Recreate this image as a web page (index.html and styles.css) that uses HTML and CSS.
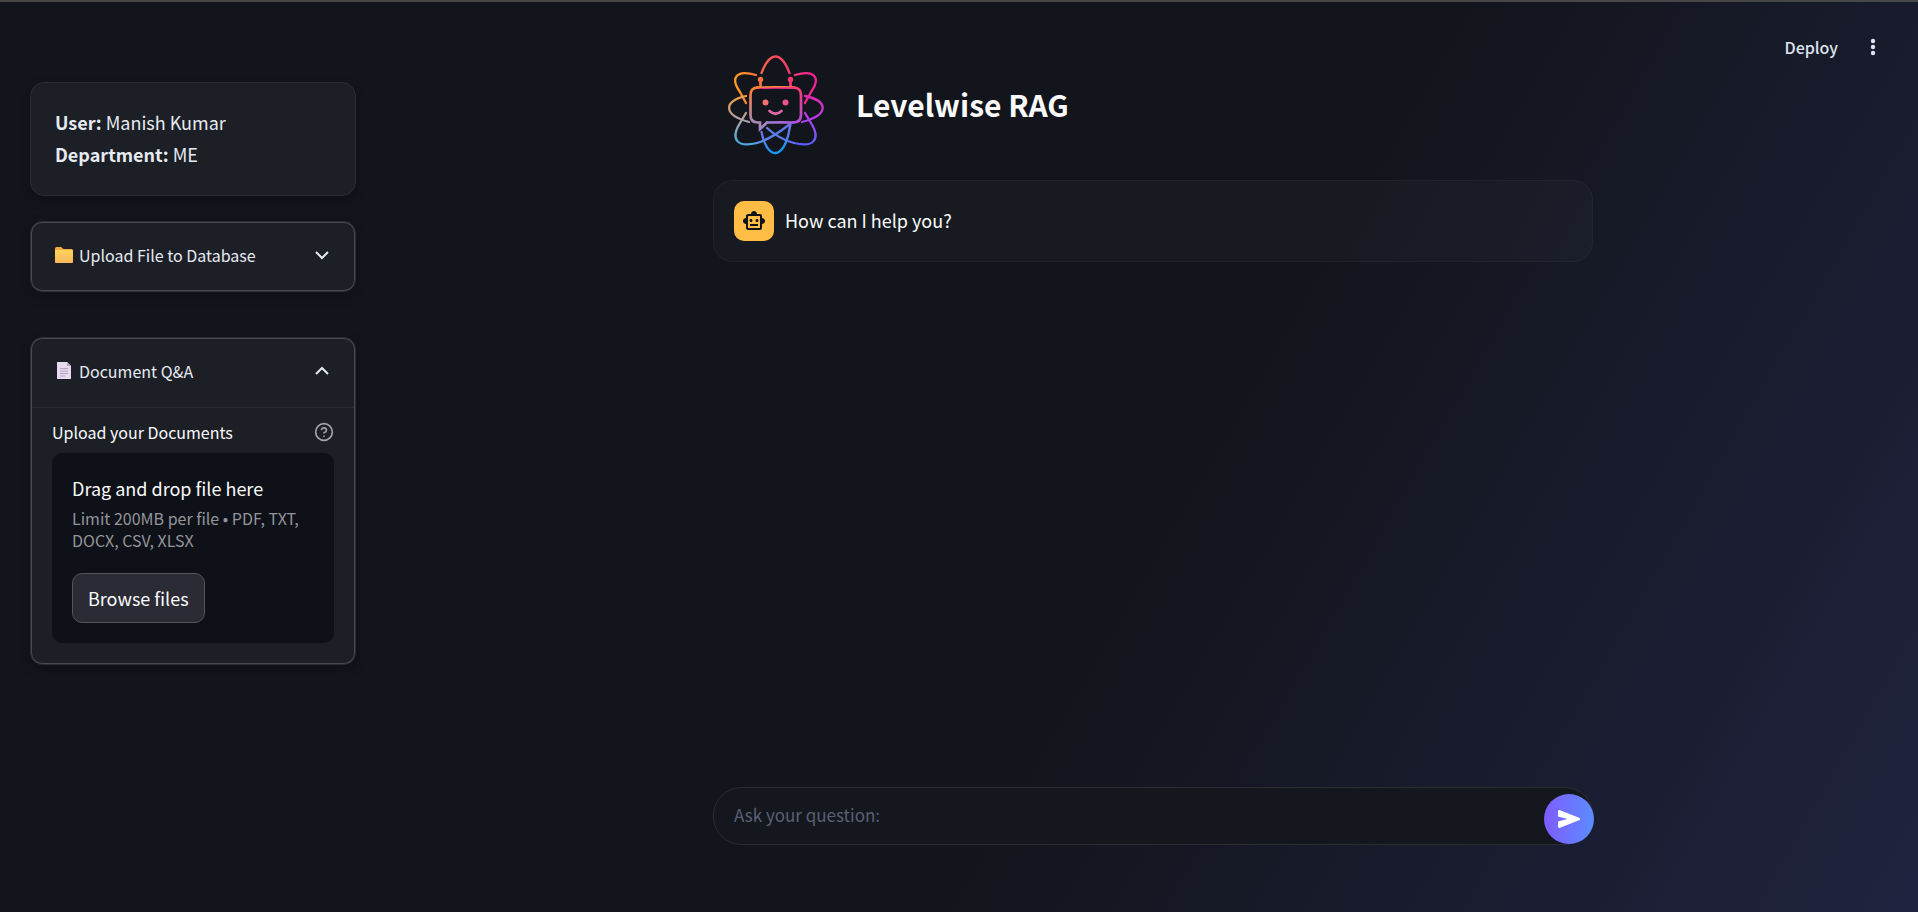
FILE: index.html
```html
<!DOCTYPE html>
<html lang="en">
<head>
<meta charset="utf-8">
<meta name="viewport" content="width=device-width, initial-scale=1">
<title>Levelwise RAG</title>
<link rel="stylesheet" href="styles.css">
</head>
<body>
<div class="app">
  <aside class="sidebar">
    <section class="card user-card">
      <p><strong>User:</strong> Manish Kumar</p>
      <p><strong>Department:</strong> ME</p>
    </section>

    <section class="card expander">
      <button class="expander-head" type="button" aria-expanded="false">
        <svg class="emoji" viewBox="0 0 20 20" aria-hidden="true">
          <path d="M1 3.500Q1 2 2.500 2H7L9.500 4H17.500Q19 4 19 5.500V9H1Z" fill="#f5a83c"/>
          <rect x="1" y="5" width="18" height="13" rx="1" fill="url(#folder)"/>
          <defs><linearGradient id="folder" x2="0" y2="1"><stop stop-color="#ffd55c"/><stop offset="1" stop-color="#f9b55c"/></linearGradient></defs>
        </svg>
        <span class="expander-title">Upload File to Database</span>
        <svg class="chevron" viewBox="0 0 20 20" aria-hidden="true"><path d="M4 7l6 6 6-6"/></svg>
      </button>
    </section>

    <section class="card expander expander-open">
      <button class="expander-head" type="button" aria-expanded="true">
        <svg class="emoji" viewBox="0 0 20 20" aria-hidden="true">
          <path d="M3 1H13L17 5V18H3Z" fill="#e6daf0"/>
          <path d="M13 1V5H17Z" fill="#b9a9c9"/>
          <path d="M6 7.500H14M6 10H14M6 12.500H14M6 15H11" stroke="#b0a3bd" stroke-width="1"/>
        </svg>
        <span class="expander-title">Document Q&amp;A</span>
        <svg class="chevron" viewBox="0 0 20 20" aria-hidden="true"><path d="M4 13l6-6 6 6"/></svg>
      </button>
      <div class="expander-body">
        <div class="label-row">
          <label for="browse">Upload your Documents</label>
          <svg class="help" viewBox="0 0 24 24" role="img" aria-label="Help"><circle cx="12" cy="12" r="10"/><path d="M9.090 9a3 3 0 0 1 5.830 1c0 2-3 3-3 3"/><path d="M12 17h.01"/></svg>
        </div>
        <div class="dropzone">
          <p>Drag and drop file here</p>
          <p class="drop-limit">Limit 200MB per file • PDF, TXT, DOCX, CSV, XLSX</p>
          <button class="browse" id="browse" type="button">Browse files</button>
        </div>
      </div>
    </section>
  </aside>

  <main class="main">
    <div class="toolbar">
      <button class="deploy" type="button">Deploy</button>
      <button class="menu" type="button" aria-label="Menu"><svg viewBox="0 0 20 20" aria-hidden="true"><circle cx="10" cy="4" r="2.200"/><circle cx="10" cy="10" r="2.200"/><circle cx="10" cy="16" r="2.200"/></svg></button>
    </div>
    <div class="content">
      <header class="brand">
        <svg class="logo" viewBox="3 0 127 125" aria-hidden="true">
          <defs>
            <linearGradient id="warm" gradientUnits="userSpaceOnUse" x1="25" y1="0" x2="106" y2="0"><stop stop-color="#ff9d1e"/><stop offset=".5" stop-color="#fb4a5a"/><stop offset="1" stop-color="#f01f9a"/></linearGradient>
            <linearGradient id="cool" gradientUnits="userSpaceOnUse" x1="25" y1="0" x2="110" y2="0"><stop stop-color="#58a9d6"/><stop offset=".5" stop-color="#5b7be8"/><stop offset="1" stop-color="#6a58f8"/></linearGradient>
            <linearGradient id="left" gradientUnits="userSpaceOnUse" x1="0" y1="50" x2="0" y2="104"><stop stop-color="#fb9d2c"/><stop offset=".5" stop-color="#b3a0a0"/><stop offset="1" stop-color="#4aa8e0"/></linearGradient>
            <linearGradient id="right" gradientUnits="userSpaceOnUse" x1="0" y1="50" x2="0" y2="104"><stop stop-color="#ea259f"/><stop offset=".5" stop-color="#b83cf0"/><stop offset="1" stop-color="#5560f8"/></linearGradient>
            <linearGradient id="base" gradientUnits="userSpaceOnUse" x1="50" y1="82" x2="56" y2="113"><stop stop-color="#9a70db"/><stop offset=".5" stop-color="#5b7be8"/><stop offset="1" stop-color="#149bff"/></linearGradient>
            <linearGradient id="faceTop" x1="0" x2="1" y1="0" y2=".2"><stop stop-color="#fb8a3a"/><stop offset="1" stop-color="#f62d8c"/></linearGradient>
            <linearGradient id="face" gradientUnits="userSpaceOnUse" x1="50" y1="0" x2="90" y2="0"><stop stop-color="#9a87cc"/><stop offset="1" stop-color="#a852e4"/></linearGradient>
            <linearGradient id="faceLeft" gradientUnits="userSpaceOnUse" x1="0" y1="48" x2="0" y2="88"><stop stop-color="#fb8038"/><stop offset="1" stop-color="#9a87cc"/></linearGradient>
            <linearGradient id="faceRight" gradientUnits="userSpaceOnUse" x1="0" y1="46" x2="0" y2="84"><stop stop-color="#fa3b70"/><stop offset="1" stop-color="#a852e4"/></linearGradient>
          </defs>
          <g fill="none" stroke-width="2.300" stroke-linecap="round">
            <path stroke="url(#warm)" d="M51.500 32C60 10 71 10 79.500 32M46 34C26 28 20 37 30 51L36 62M85 34C105 28 111 37 101 51L95 62"/>
            <path stroke="url(#left)" d="M36 55C13 60 13 74 39 81M36 72L30 82C20 98 27 107 47 102"/>
            <path stroke="url(#right)" d="M95 55C119 60 119 74 92 81M95 72L101 82C111 98 104 107 84 102"/>
            <path stroke="url(#cool)" d="M47 102Q61 98 80 83M84 102Q69 98 57 87"/>
            <path stroke="url(#base)" d="M51.500 91C57 119 74 120 79.500 88L80.500 83"/>
            <g stroke-width="2.700">
              <path stroke="#fb743e" d="M50.500 39V46"/>
              <path stroke="#fa376e" d="M80.500 39V46"/>
              <path stroke="url(#faceTop)" d="M47 46.600Q65 46.300 84 46.600"/>
              <path stroke="url(#faceLeft)" d="M48 46.500Q40.500 46.500 40.500 54V74Q40.500 81.500 48 81.500H50V88L57 81.500"/>
              <path stroke="url(#faceRight)" d="M83 46.500Q91 46.500 91 54V74Q91 81.500 83 81.500"/>
              <path stroke="url(#face)" d="M57 81.500Q70 81.400 83 81.500"/>
              <path stroke="#db69aa" d="M59.500 70Q65.500 75.500 71.500 70"/>
            </g>
          </g>
          <circle cx="50.500" cy="38.500" r="2.700" fill="#fb743e"/><circle cx="80.500" cy="38.500" r="2.700" fill="#fa376e"/>
          <circle cx="55.500" cy="61.500" r="3" fill="#f3726f"/><circle cx="75.500" cy="61.500" r="3" fill="#ec5292"/>
        </svg>
        <h1>Levelwise RAG</h1>
      </header>
      <div class="message">
        <span class="avatar"><svg viewBox="0 0 24 24" aria-hidden="true"><path d="M20 9V7c0-1.100-.9-2-2-2h-3c0-1.660-1.340-3-3-3S9 3.340 9 5H6c-1.100 0-2 .9-2 2v2c-1.660 0-3 1.340-3 3s1.340 3 3 3v4c0 1.100.9 2 2 2h12c1.100 0 2-.9 2-2v-4c1.660 0 3-1.340 3-3s-1.340-3-3-3zm-2 10H6V7h12v12zm-9-6c-.83 0-1.500-.67-1.500-1.500S8.170 10 9 10s1.500.67 1.500 1.500S9.830 13 9 13zm7.500-1.500c0 .83-.67 1.500-1.500 1.500s-1.500-.67-1.500-1.500.67-1.500 1.500-1.500 1.500.67 1.500 1.500zM8 15h8v2H8v-2z"/></svg></span>
        <p>How can I help you?</p>
      </div>
      <form class="ask">
        <input type="text" placeholder="Ask your question:" aria-label="Ask your question">
        <button class="send" type="button" aria-label="Send"><svg viewBox="0 0 24 24" aria-hidden="true"><path d="M1 4.500Q1 2.500 3 3.200L22 10.700Q24.500 12 22 13.300L3 20.800Q1 21.500 1 19.500V14.500L10.500 12L1 9.500Z"/></svg></button>
      </form>
    </div>
  </main>
</div>
</body>
</html>
```
FILE: styles.css
```css
* { box-sizing: border-box; }

body {
  margin: 0;
  color: #fafafa;
  font-family: "Noto Sans CJK KR", "Open Sans", sans-serif;
  font-size: 18px;
  line-height: 32px;
  background: #12151c;
}

p, h1 { margin: 0; }

button, input { font: inherit; color: inherit; }

button { padding: 0; border: 0; background: none; cursor: pointer; }

.app {
  display: flex;
  min-height: 100vh;
  border-top: 2px solid #474747;
  background: linear-gradient(120deg, #12151c 60%, #20233f 100%);
}

.sidebar {
  display: flex;
  flex-direction: column;
  flex: 0 0 388px;
  padding: 80px 32px 80px 30px;
}

.card {
  border: 1px solid #2a2d33;
  border-radius: 14px;
  background: #1c1f26;
  box-shadow: 0 4px 12px rgba(0, 0, 0, .25);
}

.user-card {
  padding: 23px 24px 25px;
  color: #e6eaf1;
}

.expander {
  margin-top: 25px;
  border-radius: 12px;
  box-shadow: inset 0 0 0 1px #484a4e, 0 4px 12px rgba(0, 0, 0, .25);
}

.expander-open { margin-top: 45px; }

.expander-head {
  display: flex;
  align-items: center;
  width: 100%;
  height: 69px;
  padding: 0 23px 3px;
  color: #e6eaf1;
  font-size: 16px;
  text-align: left;
}

.emoji { width: 20px; height: 20px; margin-right: 5px; }

.expander-title { flex: 1; }

.chevron {
  width: 20px;
  height: 20px;
  fill: none;
  stroke: currentColor;
  stroke-width: 2;
}

.expander-body {
  margin: 0 1px;
  padding: 10px 20px 21px;
  border-top: 1px solid #282b32;
}

.label-row {
  display: flex;
  align-items: center;
  justify-content: space-between;
  margin-bottom: 7px;
  font-size: 16px;
  line-height: 28px;
}

.help {
  width: 20px;
  height: 20px;
  fill: none;
  stroke: #a3a4a8;
  stroke-width: 2;
  stroke-linecap: round;
}

.dropzone {
  padding: 19px 20px 20px;
  border-radius: 10px;
  background: #0e1118;
}

.drop-limit {
  margin-top: 3px;
  color: #94959a;
  font-size: 16px;
  line-height: 22px;
}

.browse {
  height: 50px;
  margin-top: 22px;
  padding: 0 15px;
  border: 1px solid #53545c;
  border-radius: 10px;
  background: #2b2b36;
}

.main {
  display: flex;
  flex: 1;
  flex-direction: column;
}

.toolbar {
  position: absolute;
  top: 31px;
  right: 31px;
  display: flex;
  align-items: center;
  gap: 21px;
  color: #dfe3ee;
  font-size: 16px;
}

.deploy { font-weight: 500; }

.menu { display: flex; padding: 0 4px; }

.menu svg { width: 20px; height: 20px; fill: currentColor; }

.content {
  display: flex;
  flex: 1;
  flex-direction: column;
  width: 880px;
  max-width: 100%;
  margin: 0 auto;
  padding: 39px 0 67px;
}

.brand { display: flex; align-items: center; gap: 16px; }

.logo { width: 127px; height: 125px; }

h1 {
  font-size: 30px;
  font-weight: 600;
  line-height: 40px;
}

.message {
  display: flex;
  align-items: center;
  gap: 11px;
  margin-top: 14px;
  padding: 20px;
  border: 1px solid rgba(255, 255, 255, .04);
  border-radius: 20px;
  background: rgba(255, 255, 255, .025);
}

.message p { padding-bottom: 2px; }

.avatar {
  display: grid;
  place-items: center;
  width: 40px;
  height: 40px;
  border-radius: 10px;
  background: #ffbd45;
}

.avatar svg { width: 24px; height: 24px; fill: #0e1117; }

.ask {
  display: flex;
  align-items: flex-end;
  height: 58px;
  margin-top: auto;
  border: 1px solid #2b2d33;
  border-radius: 28px;
  background: #14171d;
}

.ask input {
  flex: 1;
  align-self: stretch;
  min-width: 0;
  padding: 0 20px 3px;
  border: 0;
  outline: 0;
  background: none;
  font-size: 17px;
}

.ask input::placeholder { color: #5b6075; opacity: 1; }

.send {
  display: grid;
  place-items: center;
  width: 50px;
  height: 50px;
  margin-right: -2px;
  border-radius: 50%;
  background: linear-gradient(90deg, #7f5cff, #5b8cff);
}

.send svg { width: 24px; height: 24px; fill: #fff; }
```
